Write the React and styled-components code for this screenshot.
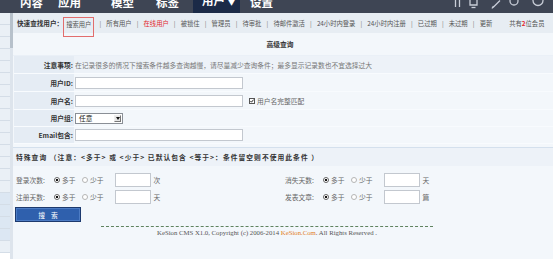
import React from 'react';
import styled, { createGlobalStyle } from 'styled-components';

const GlobalStyle = createGlobalStyle`
  html, body { margin: 0; padding: 0; background: #fff; }
  body {
    font-family: "Noto Sans CJK SC", "Noto Sans", sans-serif;
    font-size: 6.75px;
    color: #666;
  }
  * { box-sizing: border-box; }
`;

const Page = styled.div`
  width: 553px;
  height: 259px;
  overflow: hidden;
  display: flex;
  flex-direction: column;
  background: #f3f7fb;
`;

const TopBar = styled.div`
  height: 13px;
  flex: none;
  display: flex;
  align-items: stretch;
  background: #3e4554;
  overflow: hidden;
`;

const Tab = styled.div`
  margin-left: ${p => p.$ml}px;
  padding: ${p => (p.$active ? '0 5px 0 9px' : '0 4px')};
  display: flex;
  align-items: flex-end;
  overflow: hidden;
  background: ${p => (p.$active ? '#1b2a47' : 'transparent')};
`;

const TabText = styled.span`
  font-size: 11.5px;
  font-weight: bold;
  line-height: 21px;
  color: #fff;
  white-space: nowrap;
`;

const Caret = styled.span`
  font-size: 7px;
  margin-left: 3px;
`;

const TopIcons = styled.svg`
  margin-left: auto;
  margin-right: 5px;
  flex: none;
`;

const Body = styled.div`
  flex: 1;
  display: flex;
  min-height: 0;
`;

const Sidebar = styled.div`
  width: 10px;
  flex: none;
  background: #fff;
  display: flex;
  flex-direction: column;
`;

const SideItem = styled.div`
  height: 12px;
  flex: none;
  background: ${p => (p.$hl ? '#dce7f3' : '#eaf0f6')};
  border-bottom: 1px solid #d4dde7;
`;

const ScrollTrack = styled.div`
  width: 3px;
  flex: none;
  background: #dde4ec;
  display: flex;
  flex-direction: column;
`;

const ScrollThumb = styled.div`
  height: 35px;
  background: #b7c1cb;
`;

const Main = styled.div`
  flex: 1;
  min-width: 0;
  display: flex;
  flex-direction: column;
  background: #f3f7fb;
`;

const QuickBar = styled.div`
  height: 20px;
  flex: none;
  display: flex;
  align-items: center;
  padding-left: 4px;
  background: #e7edf3;
  white-space: nowrap;
  font-size: 6.3px;
`;

const QuickLabel = styled.span`
  font-weight: bold;
  color: #333;
  font-size: 6.6px;
`;

const NavLink = styled.span`
  color: ${p => (p.$red ? '#e3262b' : '#555')};
`;

const BoxedLink = styled.span`
  position: relative;
  z-index: 2;
  align-self: flex-start;
  margin-top: 4px;
  height: 20px;
  padding: 2px 2px 0 2px;
  border: 1px solid #e26d6d;
  color: #555;
`;

const Sep = styled.span`
  width: 12px;
  text-align: center;
  color: #777;
`;

const MemberCount = styled.span`
  margin-left: 17px;
  color: #555;
`;

const RedNum = styled.b`
  color: #e3262b;
`;

const TitleRow = styled.div`
  height: 23px;
  flex: none;
  display: flex;
  align-items: center;
  justify-content: center;
  padding-right: 6px;
  font-weight: bold;
  color: #333;
  border-bottom: 1px solid #eaf0f7;
`;

const FormTable = styled.div`
  margin-left: 1px;
  display: flex;
  flex-direction: column;
`;

const FormRow = styled.div`
  display: flex;
  height: ${p => p.$h}px;
  border-bottom: 1px solid #f8fbfe;
`;

const LabelCell = styled.div`
  width: 60px;
  flex: none;
  display: flex;
  align-items: center;
  justify-content: flex-end;
  padding-right: 1px;
  background: #e5ecf4;
  font-weight: bold;
  color: #333;
`;

const ValueCell = styled.div`
  flex: 1;
  display: flex;
  align-items: center;
  padding-left: 1px;
  background: ${p => (p.$tint ? '#edf2f8' : 'transparent')};
  white-space: nowrap;
  color: #777;
`;

const TextInput = styled.input`
  width: ${p => p.$w}px;
  height: ${p => p.$hgt}px;
  margin: 0;
  margin-left: ${p => p.$ml || 0}px;
  padding: 0;
  border: 1px solid #c3c8cf;
  background: #fff;
  outline: none;
`;

const SelectBox = styled.div`
  width: 48px;
  height: 11px;
  display: flex;
  align-items: center;
  justify-content: space-between;
  padding: 0 1px 0 3px;
  border: 1px solid #8a8f96;
  background: #fff;
  color: #222;
`;

const SelectBtn = styled.span`
  width: 7px;
  height: 7px;
  display: flex;
  align-items: center;
  justify-content: center;
  border: 1px solid #777;
  border-top-color: #eee;
  border-left-color: #eee;
  background: #e6e6e6;
`;

const CheckWrap = styled.span`
  display: flex;
  align-items: center;
  margin-left: 6px;
  color: #666;
`;

const CheckBox = styled.span`
  width: 6px;
  height: 6px;
  margin-right: 2px;
  display: flex;
  border: 1px solid #555;
  background: #fff;
`;

const SpecialBand = styled.div`
  margin-top: 3px;
  height: 19px;
  flex: none;
  display: flex;
  align-items: center;
  padding-left: 3px;
  border-top: 1px solid #d4e0ed;
  background: #edf2f8;
  font-weight: bold;
  color: #333;
  letter-spacing: 1.05px;
  white-space: nowrap;
`;

const FieldGrid = styled.div`
  margin-top: 6px;
  padding-left: 3px;
  display: grid;
  grid-template-columns: 269px 1fr;
  row-gap: 2px;
`;

const Field = styled.div`
  display: flex;
  align-items: center;
  height: 15px;
  white-space: nowrap;
  color: #666;
`;

const FieldLabel = styled.span`
  width: 37px;
  flex: none;
`;

const Radio = styled.span`
  width: 6px;
  height: 6px;
  flex: none;
  margin-left: ${p => p.$ml}px;
  margin-right: 2px;
  border-radius: 50%;
  border: 1px solid ${p => (p.$checked ? '#666' : '#b5b5b5')};
  background: ${p => (p.$checked ? 'radial-gradient(circle, #111 0 1.2px, #fff 1.4px)' : '#fff')};
`;

const Unit = styled.span`
  margin-left: 3px;
`;

const ButtonRow = styled.div`
  margin-top: 3px;
  padding-left: 2px;
  display: flex;
`;

const SearchButton = styled.button`
  width: 66px;
  height: 15px;
  margin: 0;
  padding: 0;
  border: 1px solid #1d3a6e;
  box-shadow: inset 0 0 0 1px #4d7cc4;
  background: #2f60ad;
  color: #fff;
  font-family: "Noto Sans CJK SC", sans-serif;
  font-size: 6.75px;
  letter-spacing: 6px;
  text-indent: 6px;
  cursor: pointer;
`;

const FooterBlock = styled.div`
  margin-left: 88px;
  width: 332px;
  margin-top: 4px;
  border-top: 1px dashed #5f835f;
  text-align: center;
  padding-top: 2px;
  font-family: "Liberation Serif", "Times New Roman", serif;
  font-size: 6.75px;
  color: #555;
  white-space: nowrap;
`;

const Orange = styled.span`
  color: #e2801f;
`;

const tabs = [
  { t: '内容', ml: 16 },
  { t: '应用', ml: 7 },
  { t: '模型', ml: 22 },
  { t: '标签', ml: 14 },
  { t: '用户', ml: 10, active: true },
  { t: '设置', ml: 6 },
];

const navLinks = ['所有用户', '在线用户', '被锁住', '管理员', '待审批', '待邮件激活', '24小时内登录', '24小时内注册', '已过期', '未过期', '更新'];

function SpecialField({ label, unit }) {
  return (
    <Field>
      <FieldLabel>{label}</FieldLabel>
      <Radio $checked $ml={1} />
      <span>多于</span>
      <Radio $ml={6.5} />
      <span>少于</span>
      <TextInput $w={36} $hgt={14} $ml={11} />
      <Unit>{unit}</Unit>
    </Field>
  );
}

export default function App() {
  return (
    <>
      <GlobalStyle />
      <Page>
        <TopBar>
          {tabs.map(tb => (
            <Tab key={tb.t} $ml={tb.ml} $active={tb.active}>
              <TabText>
                {tb.t}
                {tb.active && <Caret>▼</Caret>}
              </TabText>
            </Tab>
          ))}
          <TopIcons width="98" height="13" viewBox="0 0 98 13">
            <g stroke="#c9ced8" strokeWidth="1.3" fill="none">
              <line x1="5.5" y1="0" x2="5.5" y2="7" />
              <line x1="9.5" y1="0" x2="9.5" y2="7" />
              <path d="M20 0 V5 H27 V0" />
              <line x1="21.5" y1="7.5" x2="25.5" y2="7.5" />
              <path d="M43 7.5 L50 0.5" />
              <path d="M42 8.5 L43.5 6" />
              <circle cx="64" cy="1" r="4" />
              <circle cx="88" cy="0.5" r="5" />
            </g>
          </TopIcons>
        </TopBar>
        <Body>
          <Sidebar>
            {Array.from({ length: 20 }).map((_, i) => (
              <SideItem key={i} $hl={i >= 15 && i <= 18} />
            ))}
          </Sidebar>
          <ScrollTrack>
            <ScrollThumb />
          </ScrollTrack>
          <Main>
            <QuickBar>
              <QuickLabel>快速查找用户：</QuickLabel>
              <BoxedLink>搜索用户</BoxedLink>
              {navLinks.map(l => (
                <React.Fragment key={l}>
                  <Sep>|</Sep>
                  <NavLink $red={l === '在线用户'}>{l}</NavLink>
                </React.Fragment>
              ))}
              <MemberCount>
                共有<RedNum>2</RedNum>位会员
              </MemberCount>
            </QuickBar>
            <TitleRow>高级查询</TitleRow>
            <FormTable>
              <FormRow $h={18}>
                <LabelCell>注意事项:</LabelCell>
                <ValueCell $tint>在记录很多的情况下搜索条件越多查询越慢，请尽量减少查询条件；最多显示记录数也不宜选择过大</ValueCell>
              </FormRow>
              <FormRow $h={18}>
                <LabelCell>用户ID:</LabelCell>
                <ValueCell>
                  <TextInput $w={168} $hgt={12} />
                </ValueCell>
              </FormRow>
              <FormRow $h={18}>
                <LabelCell>用户名:</LabelCell>
                <ValueCell>
                  <TextInput $w={168} $hgt={12} />
                  <CheckWrap>
                    <CheckBox>
                      <svg width="4" height="4" viewBox="0 0 4 4">
                        <path d="M0.4 2 L1.5 3.2 L3.6 0.6" stroke="#111" strokeWidth="0.9" fill="none" />
                      </svg>
                    </CheckBox>
                    用户名完整匹配
                  </CheckWrap>
                </ValueCell>
              </FormRow>
              <FormRow $h={17}>
                <LabelCell>用户组:</LabelCell>
                <ValueCell>
                  <SelectBox>
                    <span>任意</span>
                    <SelectBtn>
                      <svg width="4" height="3" viewBox="0 0 4 3">
                        <path d="M0 0 H4 L2 3 Z" fill="#111" />
                      </svg>
                    </SelectBtn>
                  </SelectBox>
                </ValueCell>
              </FormRow>
              <FormRow $h={17}>
                <LabelCell>Email包含:</LabelCell>
                <ValueCell>
                  <TextInput $w={168} $hgt={12} />
                </ValueCell>
              </FormRow>
            </FormTable>
            <SpecialBand>特殊查询 （注意：&lt;多于&gt; 或 &lt;少于&gt; 已默认包含 &lt;等于&gt;：条件留空则不使用此条件 ）</SpecialBand>
            <FieldGrid>
              <SpecialField label="登录次数:" unit="次" />
              <SpecialField label="消失天数:" unit="天" />
              <SpecialField label="注册天数:" unit="天" />
              <SpecialField label="发表文章:" unit="篇" />
            </FieldGrid>
            <ButtonRow>
              <SearchButton>搜索</SearchButton>
            </ButtonRow>
            <FooterBlock>
              KeSion CMS X1.0, Copyright (c) 2006-2014 <Orange>KeSion.Com</Orange>. All Rights Reserved .
            </FooterBlock>
          </Main>
        </Body>
      </Page>
    </>
  );
}
